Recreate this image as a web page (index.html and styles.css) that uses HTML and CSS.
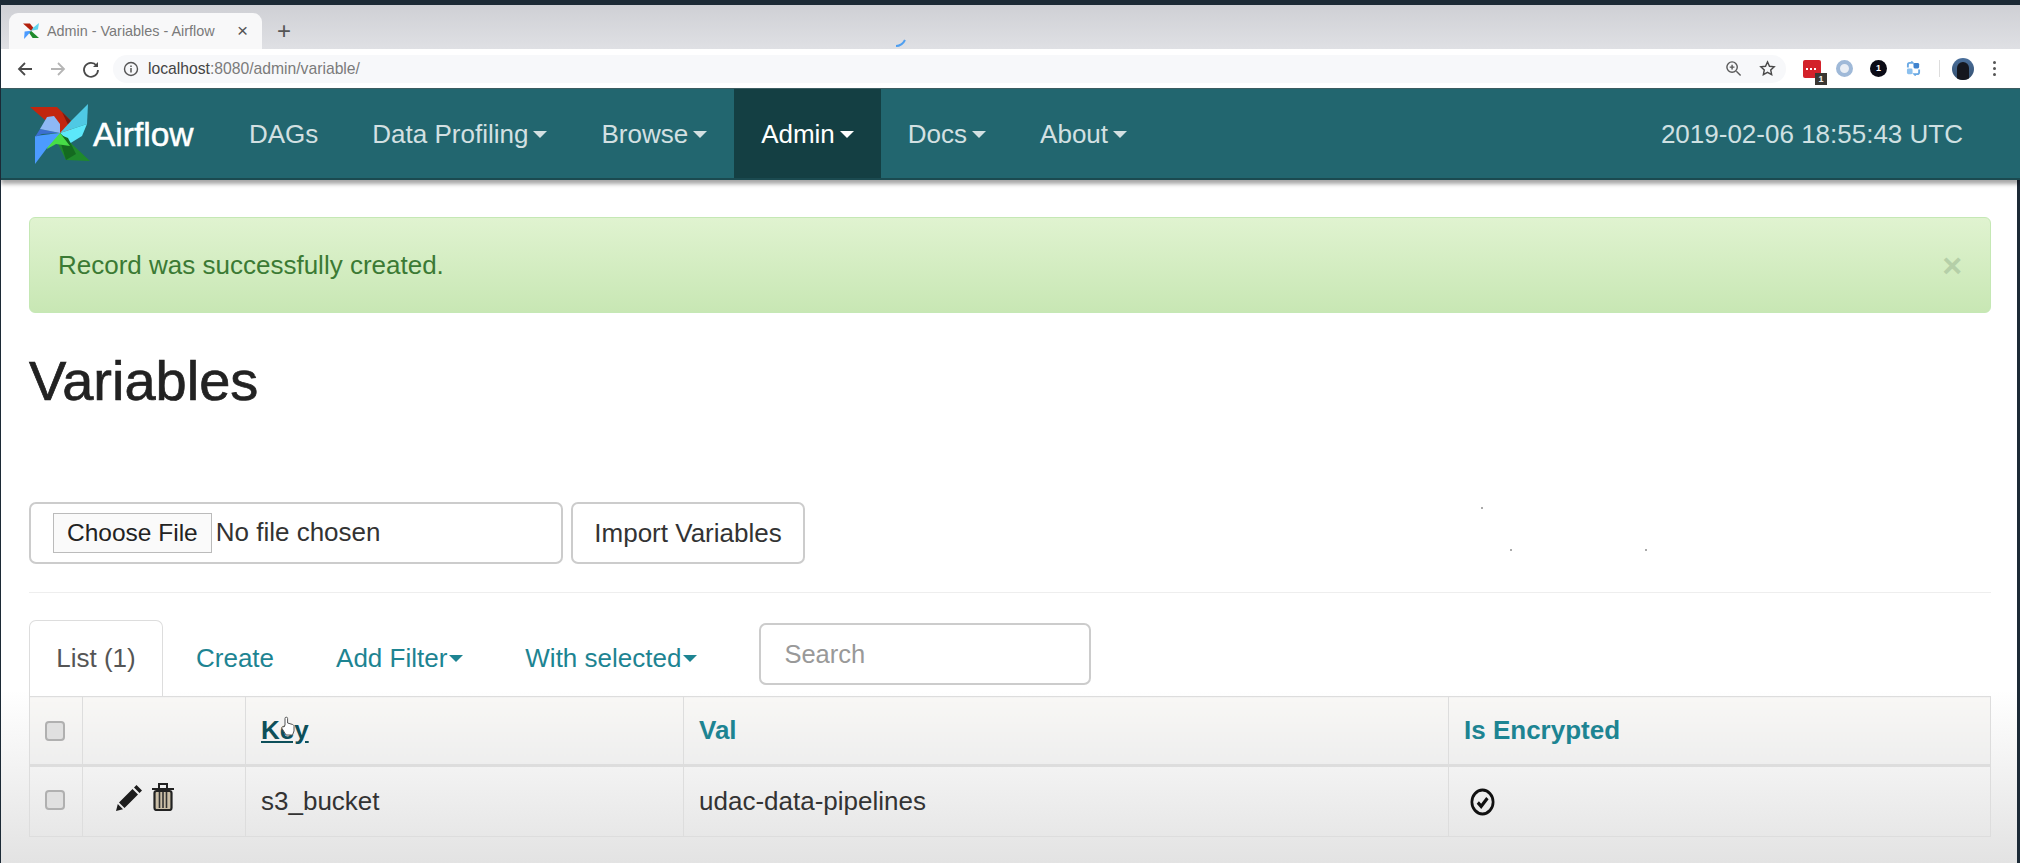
FILE: index.html
```html
<!DOCTYPE html>
<html lang="en">
<head>
    <meta charset="UTF-8">
    <title>Admin - Variables - Airflow</title>
    <link rel="stylesheet" href="styles.css">
</head>
<body>
    <div class="tabstrip">
        <div class="tab">
            <svg class="favicon" viewBox="0 0 60 60">
                <path d="M0 2 L26 2 L42 22 L30 29 Z" fill="#b3200c"/>
                <path d="M60 0 L56 24 L30 29 L38 18 Z" fill="#5fd4ee"/>
                <path d="M60 56 L36 56 L22 36 L30 29 Z" fill="#1f8a2c"/>
                <path d="M4 60 L6 32 L30 29 L22 40 Z" fill="#4c9bff"/>
            </svg>
            <span class="tab-title">Admin - Variables - Airflow</span>
            <span class="tab-close">&#215;</span>
        </div>
        <span class="tab-new">+</span>
        <svg class="spinner" viewBox="0 0 12 8"><path d="M1 7c4 0 7-2 9-6" fill="none" stroke="#4f9ff0" stroke-width="2"/></svg>
    </div>
    <div class="toolbar">
        <svg class="tool-icon" viewBox="0 0 20 20"><path d="M17 10H4M10 4l-6 6 6 6" fill="none" stroke="#4a4a4a" stroke-width="1.8"/></svg>
        <svg class="tool-icon" viewBox="0 0 20 20"><path d="M3 10h13M10 4l6 6-6 6" fill="none" stroke="#b5b5b5" stroke-width="1.8"/></svg>
        <svg class="tool-icon" viewBox="0 0 20 20"><path d="M15.5 6.500A7 7 0 1 0 17 11" fill="none" stroke="#4a4a4a" stroke-width="1.8"/><path d="M17 3v5h-5z" fill="#4a4a4a"/></svg>
        <div class="omnibox">
            <svg class="info-icon" viewBox="0 0 16 16"><circle cx="8" cy="8" r="6.500" fill="none" stroke="#555" stroke-width="1.400"/><path d="M8 7v4.500M8 4.400v1.500" stroke="#555" stroke-width="1.500"/></svg>
            <span class="url"><b>localhost</b>:8080/admin/variable/</span>
            <svg class="omni-right" viewBox="0 0 18 18"><circle cx="7.500" cy="7.500" r="5.500" fill="none" stroke="#5a5a5a" stroke-width="1.500"/><path d="M12 12l4.500 4.500M5 7.500h5M7.500 5v5" stroke="#5a5a5a" stroke-width="1.500"/></svg>
            <svg class="omni-right" viewBox="0 0 18 18"><path d="M9 2l2.100 4.600 5 .6-3.700 3.400 1 5L9 13.100l-4.400 2.500 1-5L1.900 7.200l5-.6z" fill="none" stroke="#4a4a4a" stroke-width="1.500"/></svg>
        </div>
        <div class="extensions">
            <span class="ext-red"><i class="ext-dashes"></i><span class="ext-badge">1</span></span>
            <span class="ext-ring"></span>
            <span class="ext-black">1</span>
            <svg class="ext-translate" viewBox="0 0 16 16"><path d="M2 7V4a2 2 0 0 1 2-2h3l-1.500-1.500M14 9v3a2 2 0 0 1-2 2H9l1.500 1.500" fill="none" stroke="#6aa9e4" stroke-width="2"/><rect x="1" y="8" width="6" height="6" rx="1.500" fill="#8cc0ee"/><rect x="8" y="2" width="6" height="6" rx="1.500" fill="#3f83cf"/></svg>
            <span class="ext-sep"></span>
            <span class="avatar"><i class="avatar-head"></i></span>
            <span class="menu-dots"><i></i><i></i><i></i></span>
        </div>
    </div>

    <nav class="navbar">
        <a class="brand">
            <svg class="logo" viewBox="0 0 60 60">
                <path d="M0 3 L27 3 L44 20 L41 27 L30 29 Z" fill="#c2260e"/>
                <path d="M27 3 L44 20 L41 27 L32 8 Z" fill="#7a1b10"/>
                <path d="M58 0 L57 20 L30 29 L41 17 Z" fill="#4fc9e4"/>
                <path d="M57 20 L52 32 L39 40 L30 29 Z" fill="#5ce8fa"/>
                <path d="M60 57 L36 56 L26 36 L30 29 Z" fill="#1f8a2c"/>
                <path d="M28 30 L36 56 L46 50 L38 34 Z" fill="#146a20"/>
                <path d="M17 45 L20 30 L30 29 L40 42 L26 40 Z" fill="#47dd47"/>
                <path d="M5 60 L5 32 L30 29 L17 44 Z" fill="#4c9bff"/>
                <path d="M5 33 L12 30 L30 29 L10 25 Z" fill="#3b6fd0"/>
                <path d="M10 25 L17 13 L24 12 L30 20 L30 29 Z" fill="#8db8f5"/>
            </svg>
            <span class="brand-name">Airflow</span>
        </a>
        <ul class="nav-links">
            <li>DAGs</li>
            <li>Data Profiling<span class="caret"></span></li>
            <li>Browse<span class="caret"></span></li>
            <li class="active">Admin<span class="caret"></span></li>
            <li>Docs<span class="caret"></span></li>
            <li>About<span class="caret"></span></li>
        </ul>
        <div class="clock">2019-02-06 18:55:43 UTC</div>
    </nav>

    <main class="content">
        <div class="alert">
            <span>Record was successfully created.</span>
            <span class="alert-close">&#215;</span>
        </div>
        <h1>Variables</h1>
        <form class="import-form">
            <div class="file-box"><input type="file" class="file-input"></div>
            <button type="button" class="btn">Import Variables</button>
        </form>
        <hr>
        <div class="tabs">
            <a class="tab-link current">List (1)</a>
            <a class="tab-link">Create</a>
            <a class="tab-link">Add Filter<span class="caret small"></span></a>
            <a class="tab-link">With selected<span class="caret small"></span></a>
            <input class="search" type="text" placeholder="Search">
        </div>
        <table class="grid">
            <thead>
                <tr>
                    <th class="col-check"><input type="checkbox" class="check"></th>
                    <th class="col-actions"></th>
                    <th class="col-key">
                        <span class="key-wrap"><u class="sorted">Key</u>
                            <svg class="hand" viewBox="0 0 14 20"><path d="M4 9V2.500a1.300 1.300 0 0 1 2.600 0V7l5 1.500c1 .4 1.400 1 1.400 2V15l-1.500 4H5L1 12.500c-.6-1.500.9-2.500 2-1.500z" fill="#fff" stroke="#555" stroke-width="1"/></svg>
                        </span>
                    </th>
                    <th class="col-val">Val</th>
                    <th>Is Encrypted</th>
                </tr>
            </thead>
            <tbody>
                <tr>
                    <td><input type="checkbox" class="check"></td>
                    <td class="actions">
                        <svg class="pencil" viewBox="0 0 26 26"><path d="M0 26l1.800-7 5.200 5.200zM3 17.500L16.500 4l5.500 5.500L8.500 23zM18 2.500L20.500 0 26 5.500 23.500 8z" fill="#1d1d1d"/></svg>
                        <svg class="trash" viewBox="0 0 24 29"><rect x="4" y="9" width="16" height="18" fill="#cbbfa8"/><path d="M1 7h22M8 6V2h8v4" fill="none" stroke="#222" stroke-width="2"/><rect x="3.500" y="9" width="17" height="19" rx="2" fill="none" stroke="#222" stroke-width="2.200"/><path d="M8.500 10v16M12 10v16M15.500 10v16" stroke="#333" stroke-width="1.600"/></svg>
                    </td>
                    <td>s3_bucket</td>
                    <td>udac-data-pipelines</td>
                    <td>
                        <svg class="ok" viewBox="0 0 24 24" preserveAspectRatio="none"><circle cx="12" cy="12" r="10.200" fill="none" stroke="#111" stroke-width="2.600"/><path d="M7.500 12.500l3.200 3.200 6-7" fill="none" stroke="#111" stroke-width="3"/></svg>
                    </td>
                </tr>
            </tbody>
        </table>
        <i class="speck speck-a"></i>
        <i class="speck speck-b"></i>
        <i class="speck speck-c"></i>
    </main>
</body>
</html>
```

FILE: styles.css
```css
* {
    box-sizing: border-box;
}
html, body {
    margin: 0;
    height: 100%;
}
body {
    font-family: "Liberation Sans", Arial, sans-serif;
    color: #333;
    height: 863px;
    overflow: hidden;
    border-top: 5px solid #1c2a36;
    border-left: 1px solid #1c2a36;
    background: #fff;
}

/* browser chrome */
.tabstrip {
    position: relative;
    height: 44px;
    display: flex;
    align-items: flex-end;
    background: linear-gradient(#cfd0d5, #dfe0e4);
    padding-left: 8px;
}
.tab {
    width: 253px;
    height: 36px;
    background: #f8f8f9;
    border-radius: 9px 9px 0 0;
    display: flex;
    align-items: center;
    padding: 0 14px;
}
.favicon {
    width: 16px;
    height: 16px;
    margin-right: 8px;
}
.tab-title {
    font-size: 14.4px;
    color: #7a7a7a;
    flex: 1;
    white-space: nowrap;
}
.tab-close {
    font-size: 19px;
    color: #555;
}
.tab-new {
    font-size: 24px;
    color: #555;
    margin: 0 0 4px 15px;
}
.spinner {
    position: absolute;
    left: 894px;
    top: 34px;
    width: 12px;
    height: 8px;
}
.toolbar {
    height: 39px;
    background: #fff;
    display: flex;
    align-items: center;
    padding-left: 14px;
}
.tool-icon {
    width: 20px;
    height: 20px;
    margin-right: 13px;
}
.omnibox {
    width: 1673px;
    height: 28px;
    margin-left: -1px;
    background: #f7f8fa;
    border-radius: 14px;
    display: flex;
    align-items: center;
    padding: 0 10px;
}
.info-icon {
    width: 16px;
    height: 16px;
    margin-right: 9px;
}
.url {
    font-size: 15.7px;
    color: #7b7b7b;
    flex: 1;
}
.url b {
    font-weight: normal;
    color: #444;
}
.omni-right {
    width: 17px;
    height: 17px;
    margin-left: 17px;
}
.extensions {
    display: flex;
    align-items: center;
    margin-left: 17px;
}
.ext-red {
    position: relative;
    width: 18px;
    height: 18px;
    background: #d3222a;
    border-radius: 2px;
}
.ext-dashes {
    position: absolute;
    left: 3px;
    right: 3px;
    top: 8px;
    height: 2px;
    background: repeating-linear-gradient(90deg, #fff 0 2px, transparent 2px 4px);
}
.ext-badge {
    position: absolute;
    right: -6px;
    bottom: -7px;
    width: 12px;
    height: 12px;
    background: #3a3732;
    color: #eee;
    font-size: 9px;
    font-weight: bold;
    line-height: 12px;
    text-align: center;
}
.ext-ring {
    width: 17px;
    height: 17px;
    margin-left: 15px;
    border-radius: 50%;
    border: 4px solid #9fb9d8;
    background: #e9eef5;
}
.ext-black {
    width: 17px;
    height: 17px;
    margin-left: 17px;
    border-radius: 50%;
    background: #0b0b16;
    color: #fff;
    font-size: 9px;
    font-weight: bold;
    line-height: 17px;
    text-align: center;
}
.ext-translate {
    width: 15px;
    height: 15px;
    margin-left: 19px;
}
.ext-sep {
    width: 1px;
    height: 17px;
    margin-left: 18px;
    background: #ddd;
}
.avatar {
    position: relative;
    width: 22px;
    height: 22px;
    margin-left: 12px;
    border-radius: 50%;
    overflow: hidden;
    background: linear-gradient(#4a6f9b, #35506f);
}
.avatar-head {
    position: absolute;
    left: 5px;
    top: 4px;
    width: 12px;
    height: 22px;
    border-radius: 6px 6px 0 0;
    background: #15171f;
}
.menu-dots {
    display: flex;
    flex-direction: column;
    gap: 3px;
    margin-left: 19px;
}
.menu-dots i {
    width: 3px;
    height: 3px;
    background: #555;
    border-radius: 50%;
}

/* airflow navbar */
.navbar {
    height: 92px;
    background: #22666f;
    border-top: 1px solid #3d5c60;
    border-bottom: 2px solid #1b4a50;
    box-shadow: 0 4px 4px rgba(0, 0, 0, 0.35);
    display: flex;
    align-items: stretch;
    position: relative;
    z-index: 1;
}
.brand {
    display: flex;
    align-items: center;
    width: 221px;
    padding-left: 29px;
}
.logo {
    width: 60px;
    height: 60px;
}
.brand-name {
    font-size: 33.5px;
    color: #fff;
    margin-left: 3px;
    margin-top: 2px;
    -webkit-text-stroke: 0.5px #fff;
}
.nav-links {
    list-style: none;
    display: flex;
    margin: 0;
    padding: 0;
    flex: 1;
}
.nav-links li {
    display: flex;
    align-items: center;
    padding: 2px 27px 0;
    font-size: 26px;
    color: #d3e0e2;
}
.nav-links li.active {
    background: #143f43;
    color: #fff;
}
.caret {
    display: inline-block;
    width: 0;
    height: 0;
    margin-left: 5px;
    border-top: 7px solid currentColor;
    border-left: 7px solid transparent;
    border-right: 7px solid transparent;
}
.caret.small {
    margin-left: 2px;
}
.clock {
    display: flex;
    align-items: center;
    padding: 2px 57px 0 0;
    font-size: 26px;
    color: #cfe0e2;
}

/* page */
.content {
    position: relative;
    height: 683px;
    padding: 37px 26px 0 28px;
    border-right: 3px solid #1c2a36;
    background: linear-gradient(#fff 510px, #e3e3e3 100%);
}
.alert {
    height: 96px;
    display: flex;
    align-items: center;
    justify-content: space-between;
    padding: 0 28px;
    font-size: 26px;
    color: #3b7a34;
    background: linear-gradient(#e0f3d0, #c8e7b4);
    border: 1px solid #c5e8b5;
    border-radius: 6px;
}
.alert-close {
    font-size: 34px;
    font-weight: bold;
    color: #b5cfa8;
}
h1 {
    margin: 32px 0 0;
    font-size: 56px;
    font-weight: 500;
    line-height: 72px;
    color: #222;
    -webkit-text-stroke: 0.7px #222;
}
.import-form {
    display: flex;
    gap: 8px;
    margin-top: 85px;
}
.file-box {
    width: 534px;
    height: 62px;
    display: flex;
    align-items: center;
    padding-left: 22px;
    border: 2px solid #ccc;
    border-radius: 7px;
}
.file-input {
    font-family: inherit;
    font-size: 26px;
    color: #333;
}
.file-input::file-selector-button {
    font-family: inherit;
    font-size: 24.5px;
    height: 40px;
    padding: 0 13px;
    margin-right: 4px;
    background: #fafafa;
    border: 1px solid #bbb;
    color: #222;
}
.btn {
    width: 234px;
    height: 62px;
    font-family: inherit;
    font-size: 26px;
    color: #333;
    background: #fff;
    border: 2px solid #ccc;
    border-radius: 7px;
}
hr {
    margin: 28px 0 27px;
    border: 0;
    border-top: 1px solid #eee;
}
.tabs {
    display: flex;
    align-items: flex-end;
    height: 76px;
}
.tab-link {
    display: flex;
    align-items: center;
    height: 76px;
    padding: 0 31px;
    font-size: 26px;
    color: #1d8492;
}
.tab-link.current {
    width: 134px;
    margin-right: 2px;
    justify-content: center;
    padding: 0;
    color: #555;
    background: #fff;
    border: 1px solid #ddd;
    border-bottom: 0;
    border-radius: 7px 7px 0 0;
}
.search {
    width: 332px;
    height: 62px;
    margin: 0 0 11px 31px;
    padding: 0 23px;
    font-family: inherit;
    font-size: 25.5px;
    border: 2px solid #ccc;
    border-radius: 7px;
}
.search::placeholder {
    color: #999;
}
.grid {
    width: 1962px;
    border-collapse: collapse;
    table-layout: fixed;
    font-size: 26px;
    color: #333;
}
.grid th, .grid td {
    border: 1px solid #ddd;
    padding: 0 15px;
    text-align: left;
}
.grid thead tr {
    height: 69px;
}
.grid tbody tr {
    height: 71px;
}
.grid th {
    color: #1d8492;
    border-bottom-width: 3px;
    background: linear-gradient(#f8f7f5, #eee);
}
.col-check { width: 53px; }
.col-actions { width: 163px; }
.col-key { width: 438px; }
.col-val { width: 765px; }
.key-wrap {
    position: relative;
    display: inline-block;
}
.sorted {
    color: #0d4f5a;
}
.hand {
    position: absolute;
    left: 20px;
    top: 1px;
    width: 14px;
    height: 20px;
}
.check {
    appearance: none;
    width: 20px;
    height: 20px;
    margin: 1px 0 0;
    background: #e0e0e0;
    border: 2px solid #b0b0b0;
    border-radius: 4px;
    display: block;
}
td .check {
    margin: 0 0 4px;
}
.grid td.actions {
    white-space: nowrap;
    padding-bottom: 4px;
}
.pencil {
    width: 26px;
    height: 26px;
    margin-left: 18px;
}
.trash {
    width: 24px;
    height: 29px;
    margin-left: 2px;
}
.ok {
    width: 25px;
    height: 28px;
    display: block;
}
.grid td .ok {
    margin: 0 0 0 6px;
}
.speck {
    position: absolute;
    width: 2px;
    height: 2px;
    background: #aaa;
}
.speck-a {
    left: 1480px;
    top: 327px;
}
.speck-b {
    left: 1509px;
    top: 369px;
}
.speck-c {
    left: 1644px;
    top: 369px;
}
```
